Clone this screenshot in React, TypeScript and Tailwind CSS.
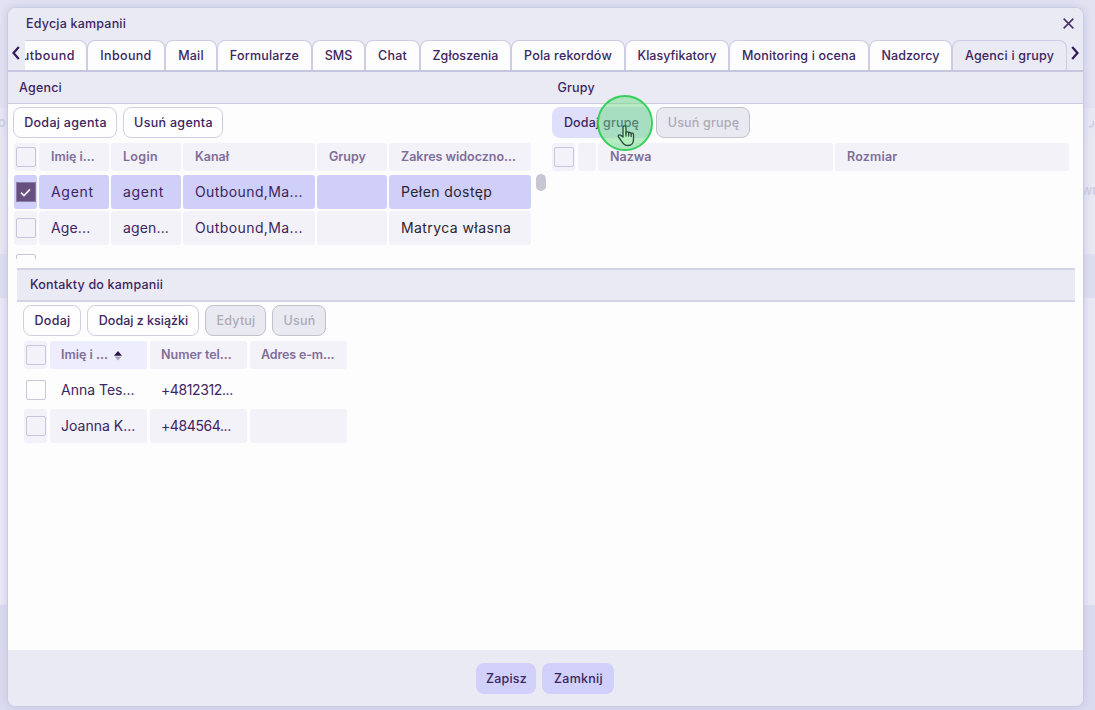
import type { ReactNode } from 'react';
import clsx from 'clsx';

type TabItem = { label: string; width: string; text?: string; active?: boolean };

const tabs: TabItem[] = [
  { label: 'Outbound', width: 'w-[78px] -ml-4 justify-end pr-[11px]', text: 'tracking-[0.5px]' },
  { label: 'Inbound', width: 'w-[78px] justify-center', text: 'tracking-[0.35px]' },
  { label: 'Mail', width: 'w-[52px] justify-center', text: 'tracking-[0.2px]' },
  { label: 'Formularze', width: 'w-[95px] justify-center', text: 'tracking-[0.2px]' },
  { label: 'SMS', width: 'w-[53px] justify-center' },
  { label: 'Chat', width: 'w-[55px] justify-center', text: 'tracking-[0.2px]' },
  { label: 'Zgłoszenia', width: 'w-[91px] justify-center', text: 'tracking-[0.1px]' },
  { label: 'Pola rekordów', width: 'w-[114px] justify-center', text: 'tracking-[0.2px]' },
  { label: 'Klasyfikatory', width: 'w-[104px] justify-center', text: 'tracking-[0px]' },
  { label: 'Monitoring i ocena', width: 'w-[140px] justify-center', text: 'tracking-[0.15px]' },
  { label: 'Nadzorcy', width: 'w-[83px] justify-center', text: 'tracking-[0.1px]' },
  { label: 'Agenci i grupy', width: 'w-[115px] justify-center', text: 'tracking-[0.2px]', active: true },
];

function Tab({ label, width, text, active }: TabItem) {
  return (
    <div
      className={clsx(
        'flex h-[30px] shrink-0 items-center rounded-t-[8px] border border-b-0 border-[#cccce4] pt-px whitespace-nowrap',
        active ? 'bg-[#eaeaf4]' : 'bg-[#fdfdfe]',
        width,
      )}
    >
      <span className={text}>{label}</span>
    </div>
  );
}

type ButtonKind = 'plain' | 'disabled' | 'filled' | 'hover';

const buttonKinds: Record<ButtonKind, string> = {
  plain: 'border border-[#cfcfe3] bg-[#fefefe]',
  disabled: 'border border-[#c2c2cd] bg-[#e9e9f2] text-[#adaab9]',
  filled: 'bg-[#d0d0fa]',
  hover: 'bg-[#dfdffc]',
};

function Button({ children, width, kind = 'plain' }: { children: ReactNode; width: string; kind?: ButtonKind }) {
  return (
    <button
      className={clsx(
        'flex h-[31px] shrink-0 items-center justify-center rounded-[8px] pt-[2px] pl-px whitespace-nowrap',
        buttonKinds[kind],
        width,
      )}
    >
      {children}
    </button>
  );
}

function Checkbox({ checked = false }: { checked?: boolean }) {
  return (
    <span
      className={clsx(
        'flex size-[20px] shrink-0 items-center justify-center',
        checked ? 'border border-[#8c7ca6] bg-[#67507f]' : 'rounded-[2px] border border-[#c6c6de]',
      )}
    >
      {checked && (
        <svg viewBox="0 0 12 10" className="h-[9px] w-[11px]" fill="none" stroke="#f4f2f8" strokeWidth="1.8">
          <path d="M1 5.2 4.3 8.4 11 1.6" />
        </svg>
      )}
    </span>
  );
}

type Tone = 'head' | 'sorted' | 'selected' | 'odd' | 'blank';

const tones: Record<Tone, string> = {
  head: 'h-[28px] bg-[#f3f2f8] font-semibold text-[12.5px] text-[#806d98]',
  sorted: 'h-[28px] bg-[#eeedfd] font-semibold text-[12.5px] text-[#806d98]',
  selected: 'h-[34px] bg-[#cfcff9] text-[14px] font-normal',
  odd: 'h-[34px] bg-[#f3f2f8] text-[14px] font-normal',
  blank: 'h-[34px] text-[14px] font-normal',
};

function Cell({ children, tone, width, className }: { children?: ReactNode; tone: Tone; width: string; className?: string }) {
  return (
    <div
      className={clsx(
        'flex shrink-0 items-center rounded-[3px] whitespace-nowrap',
        tone === 'head' || tone === 'sorted' ? 'pt-px' : 'pb-px',
        tones[tone],
        width,
        className,
      )}
    >
      {children}
    </div>
  );
}

function CheckCell({ tone, checked }: { tone: Tone; checked?: boolean }) {
  return (
    <div className={clsx('ml-px flex w-[23px] shrink-0 items-center justify-center rounded-[3px]', tones[tone])}>
      <Checkbox checked={checked} />
    </div>
  );
}

function AgentRow({ tone, cells, checked }: { tone: Tone; cells: string[]; checked?: boolean }) {
  const head = tone === 'head';
  const short = tone === 'selected' ? 'tracking-[0.7px]' : 'tracking-[0.15px]';
  return (
    <div className="flex gap-[2px]">
      <CheckCell tone={tone} checked={checked} />
      <Cell tone={tone} width="w-[70px] pl-[12px]" className={head ? '' : short}>{cells[0]}</Cell>
      <Cell tone={tone} width="w-[70px] pl-[12px]" className={head ? 'tracking-[0.3px]' : short}>{cells[1]}</Cell>
      <Cell tone={tone} width="w-[132px] pl-[12px]" className={head ? '' : 'tracking-[0.4px]'}>{cells[2]}</Cell>
      <Cell tone={tone} width="w-[70px] pl-[12px]">{cells[3]}</Cell>
      <Cell tone={tone} width="w-[142px] pl-[12px]" className={head ? '' : 'tracking-[0.42px] text-[#29252f]'}>{cells[4]}</Cell>
    </div>
  );
}

function ContactRow({ tone, cells }: { tone: Tone; cells: string[] }) {
  return (
    <div className="flex gap-[3px]">
      <CheckCell tone={tone} />
      <Cell tone={tone} width="w-[97px] pl-[11px]">{cells[0]}</Cell>
      <Cell tone={tone} width="w-[97px] pl-[11px]" className="tracking-[-0.4px]">{cells[1]}</Cell>
      <Cell tone={tone} width="w-[97px] pl-[11px]">{cells[2]}</Cell>
    </div>
  );
}

function Backdrop() {
  return (
    <div className="absolute inset-0 flex flex-col bg-[#e2e2f2] text-[13px] text-[#c9c8dc]">
      <div className="h-[108px]" />
      <div className="flex h-[30px] items-center justify-between overflow-hidden bg-[#e8e8f4]">
        <span className="-ml-[2px]">oz</span>
        <svg viewBox="0 0 8 10" className="h-[9px] w-[7px]" fill="none" stroke="#c9c8dc" strokeWidth="1.5">
          <path d="M1 8.5C5 9.5 7.2 6.5 6 2" />
        </svg>
      </div>
      <div className="flex h-[116px] items-center justify-end bg-[#e9e9f4]">
        <span className="-mr-[5px] -mt-[10px]">wn</span>
      </div>
      <div className="h-[44px] bg-[#dedef0]" />
      <div className="h-[307px] bg-[#e9e9f5]" />
      <div className="flex-1 bg-[#dadbef]" />
    </div>
  );
}

function PointerHighlight() {
  return (
    <div className="absolute top-[-12px] left-[45px] size-[56px] rounded-full border-2 border-[#35cf5b] bg-[#6fdc8580]">
      <svg viewBox="0 0 18 22" className="absolute top-[27px] left-[18px] h-[23px] w-[18px]" fill="#b3efbb" stroke="#2b4b43" strokeWidth="1.3" strokeLinejoin="round" strokeLinecap="round">
        <path d="M6 12.5V3.2C6 .8 9 .8 9 3.2V8.5C9 6.8 11.6 6.9 11.7 8.7 12 7.3 14.1 7.5 14.2 9.2 14.6 8.2 16.5 8.5 16.5 10.2V14.5C16.5 18.5 14.7 21 11 21 7.5 21 6.2 19.2 4.7 16.8L1.6 12.5C.6 10.9 2.6 9.7 3.8 10.9Z" />
        <path d="M9 8.5V11.5M11.7 8.7V11.5M14.2 9.2V12" fill="none" />
      </svg>
    </div>
  );
}

function ScrollArrow({ d }: { d: string }) {
  return (
    <svg viewBox="0 0 8 14" className="h-[14px] w-[8px] shrink-0" fill="none" stroke="#351a5a" strokeWidth="2.2">
      <path d={d} />
    </svg>
  );
}

export default function App() {
  return (
    <div className="relative h-[710px] w-[1095px] overflow-hidden font-['Inter','Open_Sans',sans-serif] text-[12.5px] font-medium text-[#3c2560]">
      <Backdrop />
      <div className="relative mt-[7px] ml-[7px] flex h-[700px] w-[1077px] flex-col overflow-hidden rounded-[9px] border border-[#cacae3] bg-[#fdfdfe] shadow-[0_0_8px_#c6c6e4]">
        <div className="flex h-[32px] shrink-0 items-center justify-between bg-[#eaeaf4] pr-[9px] pl-[18px]">
          <h1 className="tracking-[0.2px]">Edycja kampanii</h1>
          <svg viewBox="0 0 12 12" className="-mt-[2px] size-[11px]" fill="none" stroke="#43306a" strokeWidth="1.7">
            <path d="M.7.7 11.3 11.3M11.3.7.7 11.3" />
          </svg>
        </div>
        <div className="flex h-[32px] shrink-0 items-start border-b-2 border-[#c6c6de] bg-[#eaeaf4]">
          <div className="flex w-[17px] shrink-0 pt-[6px] pl-[4px]"><ScrollArrow d="M6.8 1 1.5 7 6.8 13" /></div>
          <div className="flex w-[1042px] shrink-0 overflow-hidden">
            {tabs.map((tab) => <Tab key={tab.label} {...tab} />)}
          </div>
          <div className="flex pt-[6px] pl-[4px]"><ScrollArrow d="M1.2 1 6.5 7 1.2 13" /></div>
        </div>
        <div className="flex h-[32px] shrink-0 items-center border-b border-[#cacae0] bg-[#eaeaf4] pt-px pl-[11px] tracking-[0.2px]">
          <h2 className="w-[538.5px]">Agenci</h2>
          <h2>Grupy</h2>
        </div>

        <div className="flex h-[164px] shrink-0">
          <section className="w-[544px] pt-[3px] pl-[5px]">
            <div className="flex gap-[6px] tracking-[0.3px]">
              <Button width="w-[104px]">Dodaj agenta</Button>
              <Button width="w-[100px]">Usuń agenta</Button>
            </div>
            <div className="mt-[5px] flex">
              <div className="flex h-[116px] w-[518px] flex-col gap-[2px] overflow-hidden">
                <div className="mb-[2px]">
                  <AgentRow tone="head" cells={['Imię i...', 'Login', 'Kanał', 'Grupy', 'Zakres widoczno...']} />
                </div>
                <AgentRow tone="selected" checked cells={['Agent', 'agent', 'Outbound,Ma...', '', 'Pełen dostęp']} />
                <AgentRow tone="odd" cells={['Age...', 'agen...', 'Outbound,Ma...', '', 'Matryca własna']} />
                <AgentRow tone="blank" cells={['', '', '', '', '']} />
              </div>
              <div className="mt-[31px] ml-[5px] h-[17px] w-[10px] rounded-full bg-[#c7c6d2]" />
            </div>
          </section>
          <section className="pt-[3px]">
            <div className="relative flex gap-[6px] tracking-[0.2px]">
              <Button width="w-[98px]" kind="hover">Dodaj grupę</Button>
              <Button width="w-[94px]" kind="disabled">Usuń grupę</Button>
              <PointerHighlight />
            </div>
            <div className="mt-[5px] -ml-px flex gap-[2px]">
              <CheckCell tone="head" />
              <Cell tone="head" width="ml-px w-[18px]" />
              <Cell tone="head" width="w-[235px] pl-[12px]">Nazwa</Cell>
              <Cell tone="head" width="w-[234px] pl-[12px]" className="tracking-[0.2px]">Rozmiar</Cell>
            </div>
          </section>
        </div>

        <section className="flex-1">
          <h2 className="ml-[9px] flex h-[34px] w-[1058px] items-center border-y-2 border-[#d3d3e8] bg-[#eaeaf4] pl-[13px] tracking-[0.2px]">
            Kontakty do kampanii
          </h2>
          <div className="mt-[3px] ml-[15px] flex gap-[6px]">
            <Button width="w-[58px] tracking-[0.3px]">Dodaj</Button>
            <Button width="w-[112px]">Dodaj z książki</Button>
            <Button width="w-[61px] tracking-[0.2px]" kind="disabled">Edytuj</Button>
            <Button width="w-[54px] tracking-[0.2px]" kind="disabled">Usuń</Button>
          </div>
          <div className="mt-[5px] ml-[15px] flex flex-col gap-[2px]">
            <div className="mb-[2px] flex gap-[3px]">
              <CheckCell tone="head" />
              <Cell tone="sorted" width="w-[97px] pl-[11px]" className="gap-[6px]">
                Imię i ...
                <svg viewBox="0 0 8 10" className="h-[10px] w-[8px]">
                  <path d="M4 0 8 4.7H0Z" fill="#2a1348" />
                  <path d="M.5 5.5H7.5L4 9.5Z" fill="#a9a5b3" />
                </svg>
              </Cell>
              <Cell tone="head" width="w-[97px] pl-[11px]">Numer tel...</Cell>
              <Cell tone="head" width="w-[97px] pl-[11px]" className="tracking-[-0.15px]">Adres e-m...</Cell>
            </div>
            <ContactRow tone="blank" cells={['Anna Tes...', '+4812312...', '']} />
            <ContactRow tone="odd" cells={['Joanna K...', '+484564...', '']} />
          </div>
        </section>

        <footer className="flex h-[56px] shrink-0 items-center justify-center gap-[6px] bg-[#eaeaf4] pr-px tracking-[0.25px]">
          <Button width="w-[60px]" kind="filled">Zapisz</Button>
          <Button width="w-[72px]" kind="filled">Zamknij</Button>
        </footer>
      </div>
    </div>
  );
}
